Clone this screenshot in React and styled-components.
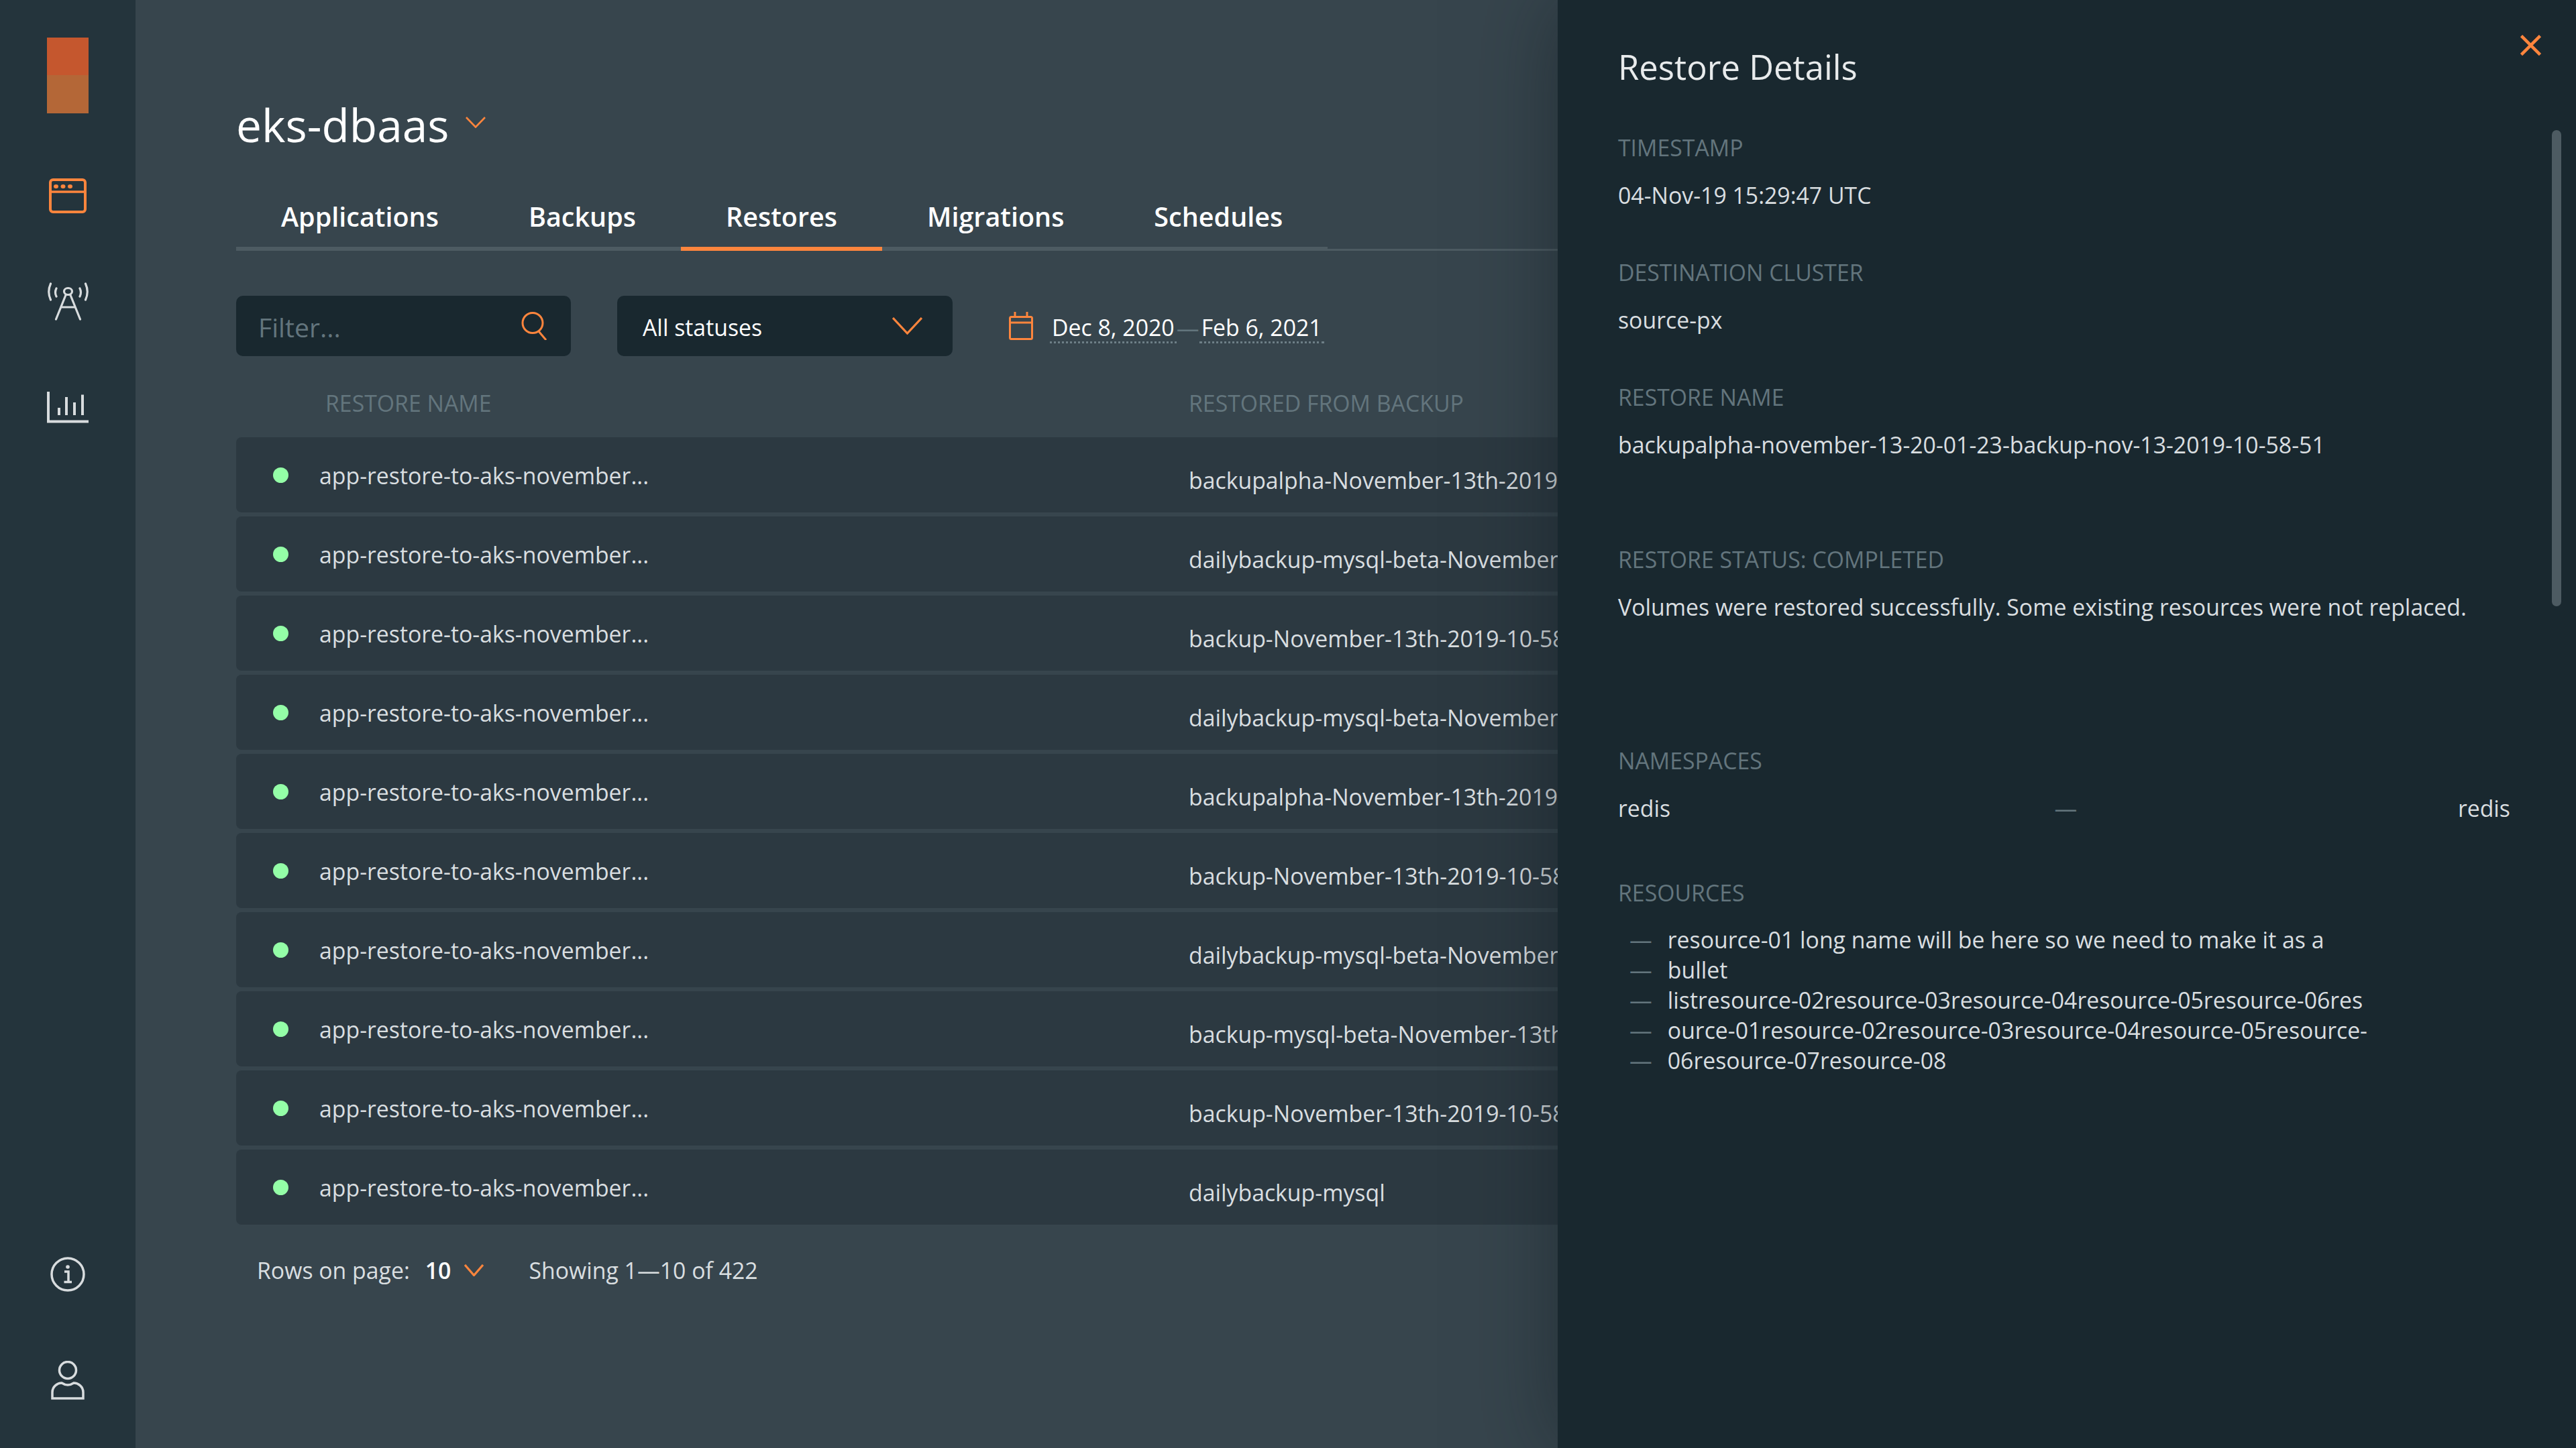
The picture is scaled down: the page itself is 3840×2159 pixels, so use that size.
import styled, { createGlobalStyle } from "styled-components";

const ORANGE = "#fd853d";
const ICON = "#d8dcde";

const restoredFrom = [
  "backupalpha-November-13th-2019",
  "dailybackup-mysql-beta-November",
  "backup-November-13th-2019-10-58",
  "dailybackup-mysql-beta-November",
  "backupalpha-November-13th-2019",
  "backup-November-13th-2019-10-58",
  "dailybackup-mysql-beta-November",
  "backup-mysql-beta-November-13th",
  "backup-November-13th-2019-10-58",
  "dailybackup-mysql",
];

const resources = [
  "resource-01 long name will be here so we need to make it as a",
  "bullet",
  "listresource-02resource-03resource-04resource-05resource-06res",
  "ource-01resource-02resource-03resource-04resource-05resource-",
  "06resource-07resource-08",
];

const tabs = ["Applications", "Backups", "Restores", "Migrations", "Schedules"];

export default function App() {
  return (
    <Page>
      <GlobalStyle />
      <Sidebar>
        <Logo />
        <NavIcons>
          <svg width="56" height="52" viewBox="0 0 56 52" fill="none" stroke={ORANGE} strokeWidth="4">
            <rect x="2" y="2" width="52" height="48" rx="4" />
            <path d="M2 20H54" strokeWidth="3.5" />
            <ellipse cx="10.5" cy="12" rx="3.5" ry="3" fill={ORANGE} stroke="none" />
            <ellipse cx="21" cy="12" rx="3.5" ry="3" fill={ORANGE} stroke="none" />
            <ellipse cx="31.5" cy="12" rx="3.5" ry="3" fill={ORANGE} stroke="none" />
          </svg>
          <svg width="63" height="57" viewBox="0 0 63 57" fill="none" stroke={ICON} strokeWidth="3.2" strokeLinecap="round">
            <ellipse cx="31.5" cy="13.5" rx="6" ry="5" />
            <path d="M28 19L13.5 55M35 19L49.5 55M21 37H42" />
            <path d="M5.5 2Q0 14 5.5 26M14 9Q11 15 14 21M57.5 2Q63 14 57.5 26M49 9Q52 15 49 21" />
          </svg>
          <svg width="62" height="47" viewBox="0 0 62 47" fill="none" stroke={ICON} strokeWidth="4">
            <path d="M2 0V44.5H62" />
            <path d="M18 24V35M29 8V35M41 16V35M53 4.5V35" />
          </svg>
        </NavIcons>
        <BottomIcons>
          <svg width="52" height="52" viewBox="0 0 52 52" fill="none" stroke={ICON} strokeWidth="3.5">
            <circle cx="26" cy="26" r="24" />
            <circle cx="26" cy="15" r="2.8" fill={ICON} stroke="none" />
            <path d="M21 22H27V37M20.5 37.5H32" />
          </svg>
          <svg width="50" height="58" viewBox="0 0 50 58" fill="none" stroke={ICON} strokeWidth="3.5">
            <ellipse cx="25" cy="14" rx="12.5" ry="12.5" />
            <path d="M2 56H48V47C48 38 40 33 34 33Q25 39 16 33C10 33 2 38 2 47Z" />
          </svg>
        </BottomIcons>
      </Sidebar>

      <Main>
        <TitleRow>
          <Title>eks-dbaas</Title>
          <svg width="30" height="17" viewBox="0 0 30 17" fill="none" stroke={ORANGE} strokeWidth="2.6">
            <path d="M1 1L15 15.5L29 1" />
          </svg>
        </TitleRow>

        <TabBar>
          {tabs.map((tab) => (
            <Tab key={tab} $active={tab === "Restores"}>
              {tab}
            </Tab>
          ))}
        </TabBar>

        <Toolbar>
          <FilterBox>
            <FilterText>Filter...</FilterText>
            <svg width="42" height="42" viewBox="0 0 42 42" fill="none" stroke={ORANGE} strokeWidth="3">
              <circle cx="17" cy="16.500" r="15" />
              <path d="M26 29L37 42" />
            </svg>
          </FilterBox>
          <SelectBox>
            <SelectText>All statuses</SelectText>
            <svg width="45" height="26" viewBox="0 0 45 26" fill="none" stroke={ORANGE} strokeWidth="3.2">
              <path d="M1 1L22.5 24L44 1" />
            </svg>
          </SelectBox>
          <DateRange>
            <svg width="36" height="42" viewBox="0 0 36 42" fill="none" stroke={ORANGE} strokeWidth="3">
              <rect x="1.500" y="7.500" width="33" height="33" rx="2" />
              <path d="M1.500 16H34.500M9 0V8M27 0V8" />
            </svg>
            <DateValue>Dec 8, 2020</DateValue>
            <DateDash>—</DateDash>
            <DateValue>Feb 6, 2021</DateValue>
          </DateRange>
        </Toolbar>

        <TableHead>
          <HeadCell $first>RESTORE NAME</HeadCell>
          <HeadCell>RESTORED FROM BACKUP</HeadCell>
        </TableHead>
        <Rows>
          {restoredFrom.map((backup, i) => (
            <Row key={i}>
              <NameCell>
                <StatusDot />
                <span>app-restore-to-aks-november...</span>
              </NameCell>
              <BackupCell>{backup}</BackupCell>
            </Row>
          ))}
        </Rows>

        <Pagination>
          <span>Rows on page:</span>
          <PageSize>10</PageSize>
          <svg width="29" height="18" viewBox="0 0 29 18" fill="none" stroke={ORANGE} strokeWidth="3.2">
            <path d="M1 1L14.500 16.500L28 1" />
          </svg>
          <Showing>Showing 1—10 of 422</Showing>
        </Pagination>
      </Main>

      <Panel>
        <CloseButton>
          <svg width="31" height="31" viewBox="0 0 31 31" fill="none" stroke={ORANGE} strokeWidth="4.600">
            <path d="M1.500 1.500L29.500 29.500M29.500 1.500L1.500 29.500" />
          </svg>
        </CloseButton>
        <ScrollThumb />
        <PanelTitle>Restore Details</PanelTitle>
        <Section $top={67}>
          <Label>TIMESTAMP</Label>
          <Value>04-Nov-19 15:29:47 UTC</Value>
        </Section>
        <Section $top={69}>
          <Label>DESTINATION CLUSTER</Label>
          <Value>source-px</Value>
        </Section>
        <Section $top={69}>
          <Label>RESTORE NAME</Label>
          <Value>backupalpha-november-13-20-01-23-backup-nov-13-2019-10-58-51</Value>
        </Section>
        <Section $top={125}>
          <Label>RESTORE STATUS: COMPLETED</Label>
          <Value>Volumes were restored successfully. Some existing resources were not replaced.</Value>
        </Section>
        <Section $top={183}>
          <Label>NAMESPACES</Label>
          <NamespaceRow>
            <span>redis</span>
            <Dash>—</Dash>
            <span>redis</span>
          </NamespaceRow>
        </Section>
        <Section $top={80}>
          <Label>RESOURCES</Label>
          <ResourceList>
            {resources.map((line) => (
              <li key={line}>{line}</li>
            ))}
          </ResourceList>
        </Section>
      </Panel>
    </Page>
  );
}

const GlobalStyle = createGlobalStyle`
  html, body {
    margin: 0;
    background: #37454d;
  }
  * {
    box-sizing: border-box;
  }
`;

const Page = styled.div`
  display: grid;
  grid-template-columns: 202px 1fr 1518px;
  height: 100vh;
  overflow: hidden;
  font-family: "Open Sans", "Liberation Sans", sans-serif;
  font-size: 33.800px;
  color: #d9dee0;
`;

const Sidebar = styled.aside`
  display: flex;
  flex-direction: column;
  align-items: center;
  padding: 56px 0 72px;
  background: #24343c;
`;

const Logo = styled.div`
  width: 62px;
  height: 113px;
  flex: none;
  background: linear-gradient(#c5572e 50%, #b46737 50%);
`;

const NavIcons = styled.div`
  display: flex;
  flex-direction: column;
  align-items: center;
  gap: 103px;
  margin-top: 97px;

  svg {
    display: block;
  }
  svg:last-child {
    margin-top: 3px;
  }
`;

const BottomIcons = styled.div`
  display: flex;
  flex-direction: column;
  align-items: center;
  gap: 103px;
  margin-top: auto;

  svg {
    display: block;
  }
`;

const Main = styled.main`
  min-width: 0;
  padding: 138px 0 0 150px;
  overflow: hidden;
`;

const TitleRow = styled.div`
  display: flex;
  align-items: center;
  gap: 25px;
  height: 96px;

  svg {
    margin-bottom: 8px;
  }
`;

const Title = styled.h1`
  margin: 0;
  font-size: 67.600px;
  font-weight: 400;
  line-height: 96px;
  color: #fff;
`;

const TabBar = styled.nav`
  display: flex;
  height: 140px;
  align-items: flex-end;
  border-bottom: 3px solid #4d5b62;
`;

const Tab = styled.div`
  height: 78px;
  margin-bottom: -3px;
  padding: 0 67px;
  border-bottom: 6px solid ${(p) => (p.$active ? ORANGE : "#4d5b62")};
  font-size: 39.500px;
  font-weight: 600;
  line-height: 54px;
  color: #fff;
`;

const Toolbar = styled.div`
  display: flex;
  align-items: center;
  height: 90px;
  margin-top: 67px;
`;

const FilterBox = styled.div`
  display: flex;
  align-items: center;
  justify-content: space-between;
  width: 499px;
  height: 90px;
  padding: 0 32px 0 33px;
  background: #19282f;
  border-radius: 10px;
`;

const FilterText = styled.span`
  padding-top: 3px;
  font-size: 39.200px;
  color: #63757d;
`;

const SelectBox = styled.div`
  display: flex;
  align-items: center;
  justify-content: space-between;
  width: 500px;
  height: 90px;
  margin-left: 69px;
  padding: 0 45px 0 38px;
  background: #19282f;
  border-radius: 10px;
  color: #fff;
`;

const SelectText = styled.span`
  padding-top: 3px;
`;

const DateRange = styled.div`
  display: flex;
  align-items: center;
  margin-left: 84px;
  padding-top: 6px;

  svg {
    margin: -6px 25px 0 0;
  }
`;

const DateValue = styled.span`
  padding: 0 3px;
  line-height: 42px;
  border-bottom: 3px dotted #6d7f87;
  color: #fff;
`;

const DateDash = styled.span`
  width: 34px;
  text-align: center;
  color: #63757d;
`;

const TableHead = styled.div`
  display: grid;
  grid-template-columns: 1420px auto;
  align-items: center;
  width: 2400px;
  height: 121px;
  padding-top: 18px;
`;

const HeadCell = styled.div`
  padding-left: ${(p) => (p.$first ? "133px" : "0")};
  color: #63757d;
`;

const Rows = styled.div`
  display: flex;
  flex-direction: column;
  gap: 6px;
  width: 2400px;
`;

const Row = styled.div`
  display: grid;
  grid-template-columns: 1420px auto;
  align-items: center;
  height: 112px;
  background: #2c3941;
  border-radius: 8px;
  white-space: nowrap;
`;

const NameCell = styled.div`
  display: flex;
  align-items: center;
  gap: 46px;
  padding-left: 55px;

  span {
    padding-top: 2px;
  }
`;

const StatusDot = styled.i`
  width: 23px;
  height: 23px;
  border-radius: 50%;
  background: #94fea7;
`;

const BackupCell = styled.div`
  padding-top: 15px;
`;

const Pagination = styled.div`
  display: flex;
  align-items: center;
  height: 50px;
  margin-top: 43px;
  padding-left: 31px;
`;

const PageSize = styled.span`
  margin: 0 20px 0 23px;
  font-weight: 600;
  color: #fff;
`;

const Showing = styled.span`
  margin-left: 67px;
`;

const Panel = styled.section`
  position: relative;
  z-index: 1;
  padding: 70px 98px 0 90px;
  background: #19282f;
  box-shadow: 0 0 120px rgba(16, 26, 32, 0.5);
`;

const CloseButton = styled.div`
  position: absolute;
  top: 52px;
  right: 52px;
  line-height: 0;
`;

const ScrollThumb = styled.div`
  position: absolute;
  top: 194px;
  right: 22px;
  width: 14px;
  height: 710px;
  background: #4d5b62;
  border-radius: 7px;
`;

const PanelTitle = styled.h2`
  margin: 0;
  font-size: 50.800px;
  font-weight: 400;
  line-height: 60px;
  color: #e8ebec;
`;

const Section = styled.div`
  margin-top: ${(p) => p.$top}px;
`;

const Label = styled.div`
  line-height: 46px;
  margin-bottom: 25px;
  color: #63757d;
`;

const Value = styled.div`
  line-height: 46px;
`;

const NamespaceRow = styled.div`
  display: flex;
  justify-content: space-between;
  line-height: 46px;
`;

const Dash = styled.span`
  margin-left: 5px;
  color: #63757d;
`;

const ResourceList = styled.ul`
  margin: 0;
  padding: 0;
  list-style: none;
  line-height: 45px;

  li {
    display: flex;
    gap: 23px;
    padding-left: 17px;
  }
  li::before {
    content: "—";
    color: #63757d;
  }
`;
